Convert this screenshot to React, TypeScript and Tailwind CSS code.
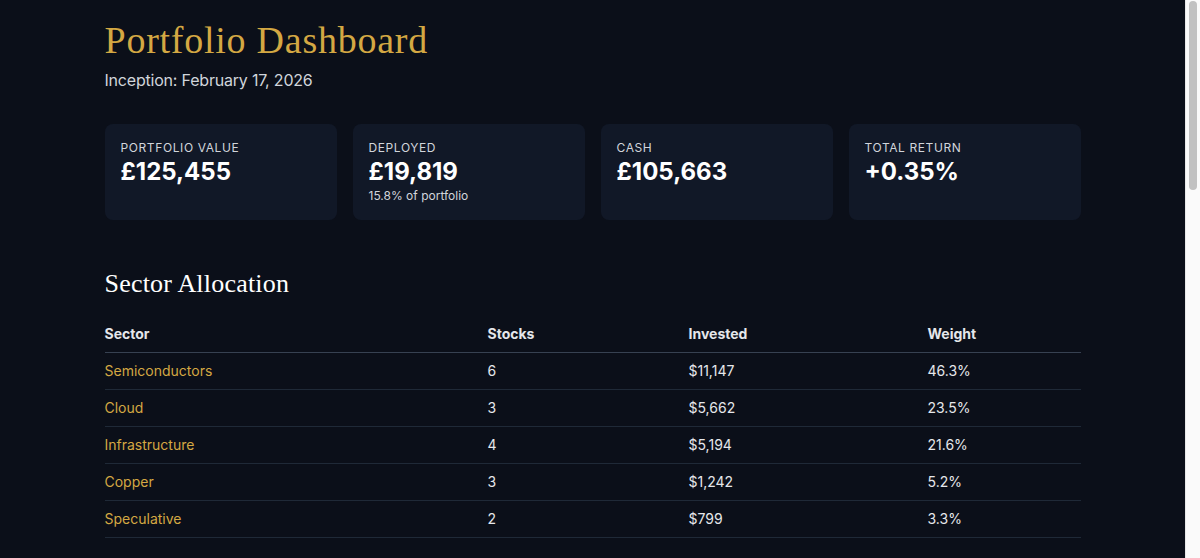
import React from "react";

const cards = [
  { label: "Portfolio Value", value: "£125,455" },
  { label: "Deployed", value: "£19,819", sub: "15.8% of portfolio" },
  { label: "Cash", value: "£105,663" },
  { label: "Total Return", value: "+0.35%" },
];

const rows = [
  ["Semiconductors", "6", "$11,147", "46.3%"],
  ["Cloud", "3", "$5,662", "23.5%"],
  ["Infrastructure", "4", "$5,194", "21.6%"],
  ["Copper", "3", "$1,242", "5.2%"],
  ["Speculative", "2", "$799", "3.3%"],
];

export default function App() {
  return (
    <div className="flex h-screen overflow-hidden bg-[#0b0f19] text-[#e5e7eb] font-['Inter',sans-serif]">
      <main className="flex-1 min-w-0">
        <div className="mx-auto max-w-5xl px-6 pt-5 pb-16">
          <h1 className="text-[38px] leading-[40px] text-[#d4a843] font-['Liberation_Serif',serif] tracking-[0.75px]">
            Portfolio Dashboard
          </h1>
          <p className="mt-2 text-base leading-6 text-[#d1d5db] tracking-[-0.2px]">Inception: February 17, 2026</p>

          <div className="mt-8 grid grid-cols-4 gap-4">
            {cards.map((c) => (
              <div key={c.label} className="rounded-lg bg-[#111827] p-4">
                <div className="text-xs leading-4 uppercase tracking-[0.6px] text-[#d1d5db]">{c.label}</div>
                <div className="text-2xl leading-8 font-bold text-white">{c.value}</div>
                {c.sub && <div className="text-xs leading-4 text-[#d1d5db]">{c.sub}</div>}
              </div>
            ))}
          </div>

          <h2 className="mt-12 mb-4 text-[26px] leading-8 text-white font-['Liberation_Serif',serif] tracking-[0.2px]">
            Sector Allocation
          </h2>
          <table className="w-full text-sm border-collapse">
            <thead>
              <tr className="border-b border-[#374151] text-left text-[#e5e7eb]">
                <th className="w-[383px] py-2 font-bold">Sector</th>
                <th className="w-[201px] py-2 font-bold">Stocks</th>
                <th className="w-[239px] py-2 font-bold">Invested</th>
                <th className="py-2 font-bold">Weight</th>
              </tr>
            </thead>
            <tbody>
              {rows.map((r) => (
                <tr key={r[0]} className="border-b border-[#1f2937]">
                  <td className="py-2 text-[#d4a843]">{r[0]}</td>
                  <td className="py-2">{r[1]}</td>
                  <td className="py-2">{r[2]}</td>
                  <td className="py-2">{r[3]}</td>
                </tr>
              ))}
            </tbody>
          </table>
        </div>
      </main>
      <aside className="w-[15px] shrink-0 border-l border-[#e8e8e8] bg-[#fafafa] px-[3px] pt-[1px]">
        <div className="h-[189px] rounded-full bg-[#c1c1c1]" />
      </aside>
    </div>
  );
}
